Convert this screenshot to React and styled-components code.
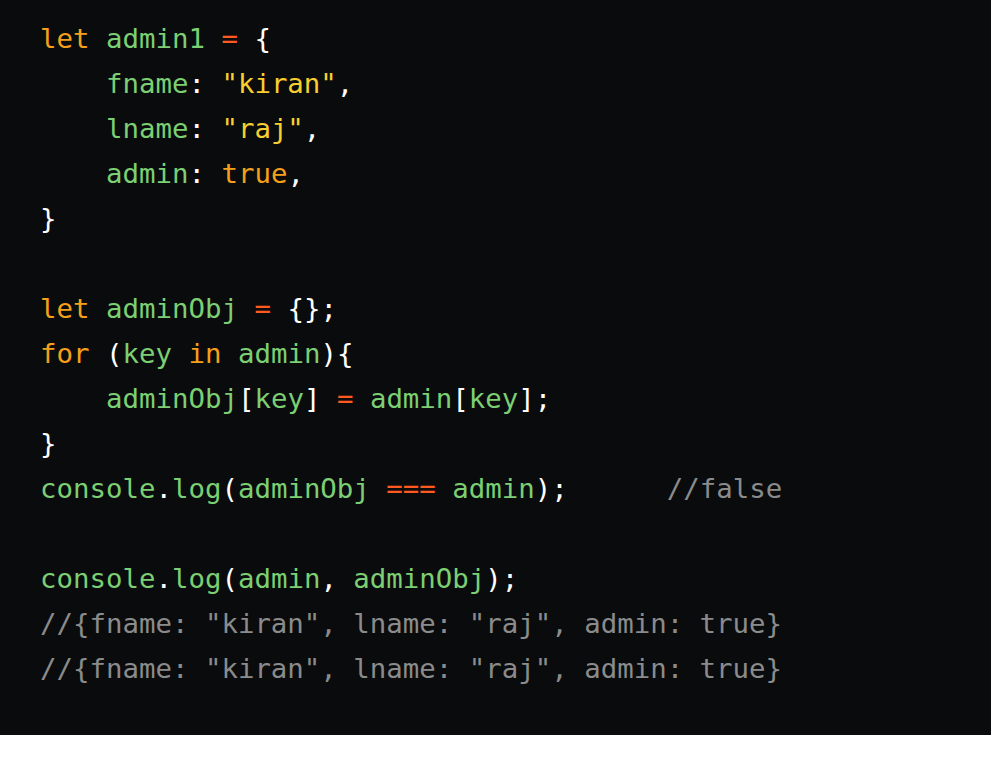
import styled, { createGlobalStyle } from "styled-components";

const Global = createGlobalStyle`
  body {
    margin: 0;
    background: #ffffff;
  }
`;

const colors = {
  kw: "#f5a01a",
  op: "#ff5a1f",
  id: "#7ccf72",
  str: "#f7cf2e",
  punc: "#ffffff",
  cmt: "#8b8b8b",
};

const CodeBlock = styled.pre`
  margin: 0;
  padding: 16px 40px 44px 40px;
  background: #0a0b0d;
  font-family: "DejaVu Sans Mono", "Liberation Mono", monospace;
  font-size: 27.4px;
  line-height: 45px;
  color: #ffffff;
`;

const Line = styled.div`
  height: 45px;
  white-space: pre;
`;

const Tok = styled.span`
  color: ${(p) => colors[p.$k] || "#ffffff"};
`;

const K = (p) => <Tok $k="kw">{p.children}</Tok>;
const O = (p) => <Tok $k="op">{p.children}</Tok>;
const I = (p) => <Tok $k="id">{p.children}</Tok>;
const S = (p) => <Tok $k="str">{p.children}</Tok>;
const P = (p) => <Tok $k="punc">{p.children}</Tok>;
const C = (p) => <Tok $k="cmt">{p.children}</Tok>;

const App = () => {
  return (
    <>
      <Global />
      <CodeBlock>
        <Line>
          <K>let</K> <I>admin1</I> <O>=</O> <P>{"{"}</P>
        </Line>
        <Line>
          {"    "}<I>fname</I><P>: </P><S>"kiran"</S><P>,</P>
        </Line>
        <Line>
          {"    "}<I>lname</I><P>: </P><S>"raj"</S><P>,</P>
        </Line>
        <Line>
          {"    "}<I>admin</I><P>: </P><K>true</K><P>,</P>
        </Line>
        <Line>
          <P>{"}"}</P>
        </Line>
        <Line> </Line>
        <Line>
          <K>let</K> <I>adminObj</I> <O>=</O> <P>{"{};"}</P>
        </Line>
        <Line>
          <K>for</K> <P>(</P><I>key</I> <K>in</K> <I>admin</I><P>){"{"}</P>
        </Line>
        <Line>
          {"    "}<I>adminObj</I><P>[</P><I>key</I><P>]</P> <O>=</O> <I>admin</I><P>[</P><I>key</I><P>];</P>
        </Line>
        <Line>
          <P>{"}"}</P>
        </Line>
        <Line>
          <I>console</I><P>.</P><I>log</I><P>(</P><I>adminObj</I> <O>===</O> <I>admin</I><P>);</P>
          {"      "}<C>//false</C>
        </Line>
        <Line> </Line>
        <Line>
          <I>console</I><P>.</P><I>log</I><P>(</P><I>admin</I><P>, </P><I>adminObj</I><P>);</P>
        </Line>
        <Line>
          <C>{'//{fname: "kiran", lname: "raj", admin: true}'}</C>
        </Line>
        <Line>
          <C>{'//{fname: "kiran", lname: "raj", admin: true}'}</C>
        </Line>
      </CodeBlock>
    </>
  );
};

export default App;
